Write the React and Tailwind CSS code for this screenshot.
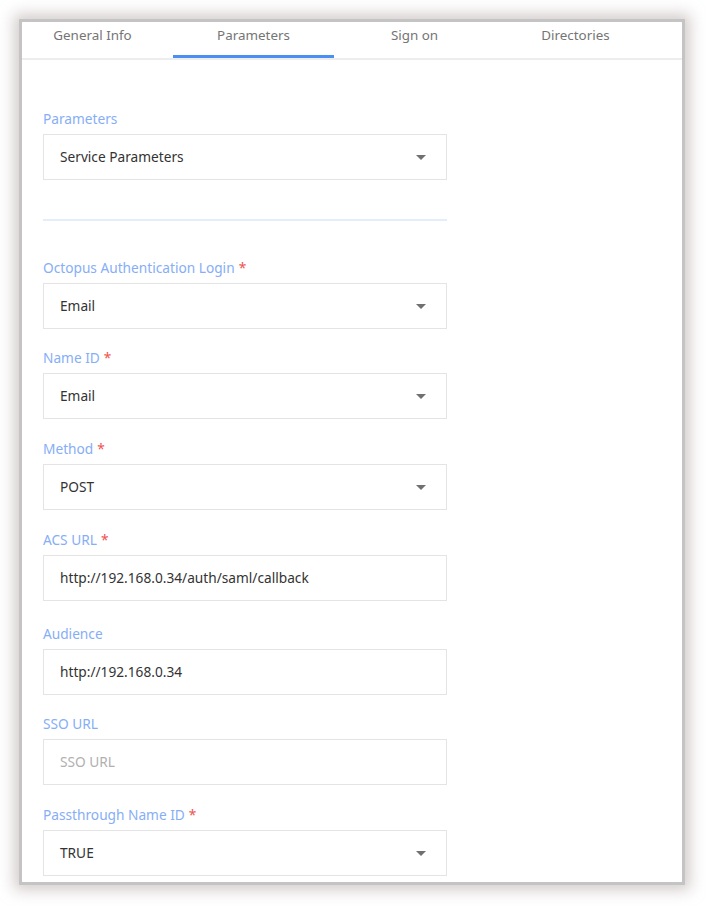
import React from "react";

const font = { fontFamily: '"Noto Sans", "Open Sans", sans-serif' };

function Caret() {
  return (
    <svg width="10" height="5" viewBox="0 0 10 5" className="shrink-0">
      <path d="M0 0 L10 0 L5 5 Z" fill="#707070" />
    </svg>
  );
}

function Label({ text, required }) {
  return (
    <div className="h-[20px] mb-[5px] text-[13.7px] leading-[20px] text-[#86aef6]">
      {text}
      {required && <span className="ml-[4px] text-[#f0524f]">*</span>}
    </div>
  );
}

function SelectField({ label, value, required, className = "" }) {
  return (
    <div className={className}>
      <Label text={label} required={required} />
      <div className="h-[46px] w-[404px] border border-[#e4e4e4] flex items-center justify-between pl-[16px] pr-[20px] text-[13.7px] text-[#333]">
        <span>{value}</span>
        <Caret />
      </div>
    </div>
  );
}

function TextField({ label, value, placeholder, required, className = "" }) {
  return (
    <div className={className}>
      <Label text={label} required={required} />
      <div className="h-[46px] w-[404px] border border-[#e4e4e4] flex items-center pl-[16px] text-[13.7px]">
        {value ? (
          <span className="text-[#333]">{value}</span>
        ) : (
          <span className="text-[#b0b0b0]">{placeholder}</span>
        )}
      </div>
    </div>
  );
}

const tabs = ["General Info", "Parameters", "Sign on", "Directories"];

export default function App() {
  return (
    <div className="w-[706px] h-[906px] bg-white p-[19px]" style={font}>
      <div className="w-[666px] h-[866px] border-[3px] border-[#c4c4c4] bg-white overflow-hidden shadow-[0_0_14px_5px_rgba(175,160,160,0.55)]">
        <div className="flex ml-[-10px] border-b-2 border-[#ededed]">
          {tabs.map((t, i) => (
            <div
              key={t}
              className={`w-[161px] h-[36px] pt-[3px] text-center text-[13.4px] leading-[20px] text-[#757575] ${
                i === 1 ? "border-b-[3px] border-[#4a8ff2]" : ""
              }`}
            >
              {t}
            </div>
          ))}
        </div>

        <div className="pl-[21px] pt-[49px]">
          <SelectField label="Parameters" value="Service Parameters" />
          <div className="w-[404px] h-[2px] bg-[#e3edfb] mt-[39px]" />
          <SelectField
            className="mt-[37px]"
            label="Octopus Authentication Login"
            value="Email"
            required
          />
          <SelectField className="mt-[19px]" label="Name ID" value="Email" required />
          <SelectField className="mt-[20px]" label="Method" value="POST" required />
          <TextField
            className="mt-[20px]"
            label="ACS URL"
            value="http://192.168.0.34/auth/saml/callback"
            required
          />
          <TextField className="mt-[23px]" label="Audience" value="http://192.168.0.34" />
          <TextField className="mt-[19px]" label="SSO URL" placeholder="SSO URL" />
          <SelectField
            className="mt-[20px]"
            label="Passthrough Name ID"
            value="TRUE"
            required
          />
        </div>
      </div>
    </div>
  );
}
